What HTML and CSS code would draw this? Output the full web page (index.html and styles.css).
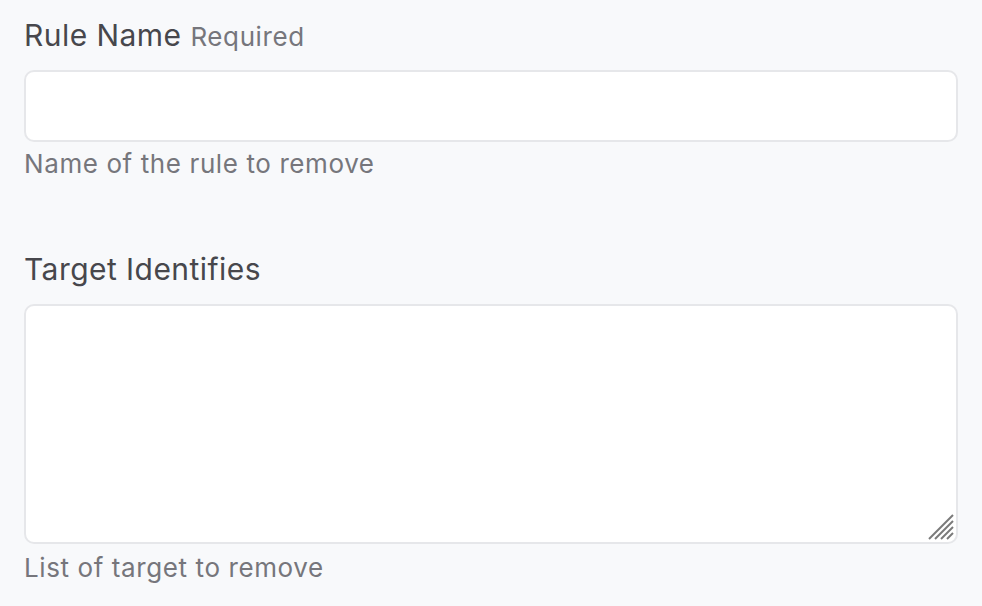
FILE: index.html
```html
<!DOCTYPE html>
<html>
<head>
<meta charset="utf-8">
<link rel="stylesheet" href="styles.css">
</head>
<body>
<form class="form">
  <div class="field">
    <label class="label" for="rule">Rule Name <span class="req">Required</span></label>
    <input class="input" id="rule" type="text">
    <div class="help">Name of the rule to remove</div>
  </div>
  <div class="field field-second">
    <label class="label" for="targets">Target Identifies</label>
    <div class="ta-wrap">
      <textarea class="textarea" id="targets"></textarea>
      <svg class="grip" width="26" height="26" viewBox="0 0 26 26">
        <g stroke="#7a7a7a" stroke-width="2" stroke-linecap="butt">
          <line x1="1" y1="25" x2="25" y2="1"/>
          <line x1="7" y1="25" x2="25" y2="7"/>
          <line x1="13" y1="25" x2="25" y2="13"/>
          <line x1="19" y1="25" x2="25" y2="19"/>
        </g>
      </svg>
    </div>
    <div class="help help-last">List of target to remove</div>
  </div>
</form>
</body>
</html>
```
FILE: styles.css
```css
html, body {
  margin: 0;
  padding: 0;
  background: #f8f9fb;
}
body {
  font-family: Inter, "Helvetica Neue", Arial, sans-serif;
  color: #47474c;
}
.form {
  padding: 17px 24px 0 24px;
  width: 934px;
}
.field {
  display: flex;
  flex-direction: column;
}
.field-second {
  margin-top: 71px;
}
.label {
  display: block;
  height: 36px;
  font-size: 30px;
  line-height: 36px;
  letter-spacing: 0.45px;
  color: #47474c;
  margin-bottom: 17px;
}
.req {
  font-size: 26px;
  line-height: 1;
  letter-spacing: 0.6px;
  color: #76767c;
}
.input {
  box-sizing: border-box;
  height: 72px;
  width: 100%;
  background: #fff;
  border: 2px solid #e6e7ea;
  border-radius: 10px;
  outline: none;
  margin: 0;
}
.ta-wrap {
  position: relative;
}
.textarea {
  display: block;
  box-sizing: border-box;
  height: 240px;
  width: 100%;
  background: #fff;
  border: 2px solid #e6e7ea;
  border-radius: 10px;
  resize: none;
  outline: none;
  margin: 0;
}
.grip {
  position: absolute;
  right: 4px;
  bottom: 4px;
}
.help {
  margin-top: 6px;
  font-size: 26px;
  line-height: 32px;
  letter-spacing: 0.6px;
  color: #76767c;
}
.help-last {
  margin-top: 8px;
}
```
